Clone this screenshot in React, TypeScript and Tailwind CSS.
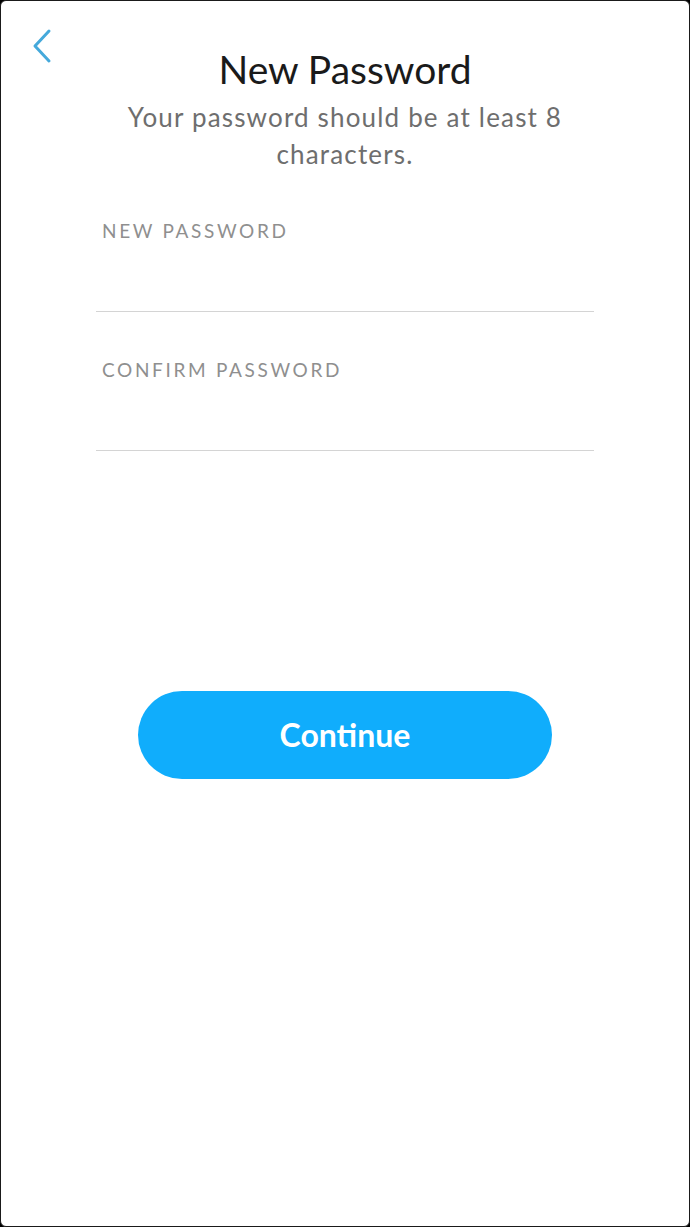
export default function App() {
  return (
    <div className="min-h-[1227px] w-[690px] bg-black font-['Lato',sans-serif]">
      <div className="flex h-[1227px] w-[690px] flex-col rounded-[6px] border border-[#1a1a1a] bg-white">
        <div className="relative px-6 pt-[44px]">
          <button type="button" aria-label="Back" className="absolute left-[31px] top-[27px] text-[#45a9db]">
            <svg width="20" height="36" viewBox="0 0 20 36" fill="none" stroke="currentColor" strokeWidth="3" strokeLinecap="round" strokeLinejoin="round">
              <polyline points="17,3 3,18 17,33" />
            </svg>
          </button>
          <h1 className="text-center text-[39px] leading-[48px] text-[#1a1a1a]">New Password</h1>
          <p className="mx-auto mt-[6px] w-[480px] text-center text-[26px] leading-[37px] tracking-[0.045em] text-[#6e6e6e]">
            Your password should be at least 8 characters.
          </p>
        </div>

        <div className="mx-auto mt-[46px] flex w-[498px] flex-col">
          <label className="border-b border-[#d4d4d4] px-[6px] pb-[68px] text-[19px] leading-[24px] tracking-[0.14em] text-[#8f8f8f]">
            NEW PASSWORD
          </label>
          <label className="mt-[46px] border-b border-[#d4d4d4] px-[6px] pb-[68px] text-[19px] leading-[24px] tracking-[0.14em] text-[#8f8f8f]">
            CONFIRM PASSWORD
          </label>
        </div>

        <button
          type="button"
          className="mx-auto mt-[240px] h-[88px] w-[414px] rounded-full bg-[#10adfc] text-[32px] font-bold text-white"
        >
          Continue
        </button>
      </div>
    </div>
  );
}
